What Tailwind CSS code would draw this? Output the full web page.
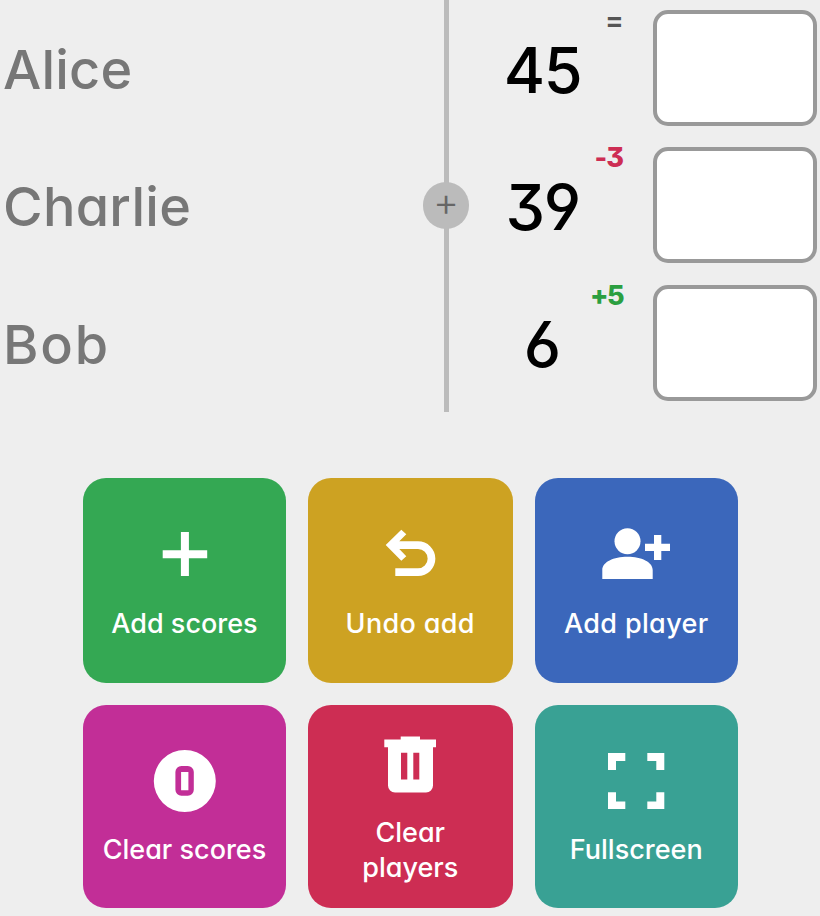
<!DOCTYPE html>
<html lang="en">
<head>
<meta charset="utf-8">
<title>Scores</title>
<script src="https://cdn.jsdelivr.net/npm/@tailwindcss/browser@4"></script>
</head>
<body class="h-[916px] w-[820px] overflow-hidden bg-[#eee] font-['Inter','Lato',sans-serif] font-medium [font-feature-settings:'cv03','cv04','cv09','cv11']">
<main class="flex flex-col">
  <section class="relative flex h-[412px] flex-col">
    <div class="absolute left-[443.5px] top-0 h-[412px] w-[5.5px] bg-[#bbb]"></div>
    <button class="absolute left-[423px] top-[181.5px] flex h-[47px] w-[46px] items-center justify-center rounded-full bg-[#bbb] pb-[6px] text-[40px] font-light text-[#666]">+</button>
    <div class="flex h-[137px] pt-[10px]">
      <div class="flex h-[118px] w-[479px] items-center pl-[3px] text-[54px] text-[#777]"><span class="tracking-[0.2px]">Alice</span></div>
      <div class="flex h-[120px] w-[127px] items-center justify-center text-[63px] tracking-[-1.5px] text-black"><span>45</span></div>
      <div class="-ml-4 -mt-[2px] w-[33px] text-right text-[27px] leading-[26px] font-bold tracking-[-0.5px] text-[#555]">=</div>
      <input aria-label="Alice score" class="ml-[30px] h-[116px] w-[164px] rounded-[15px] border-4 border-[#999] bg-white">
    </div>
    <div class="flex h-[138px] pt-[10px]">
      <div class="flex h-[118px] w-[479px] items-center pl-[3px] text-[54px] text-[#777]"><span class="tracking-[0.3px]">Charlie</span></div>
      <div class="flex h-[120px] w-[127px] items-center justify-center text-[63px] tracking-[-1.5px] text-black"><span>39</span></div>
      <div class="-ml-4 -mt-[2px] w-[33px] text-right text-[27px] leading-[26px] font-extrabold tracking-[-1px] text-[#cd2d53]">-3</div>
      <input aria-label="Charlie score" class="ml-[30px] h-[116px] w-[164px] rounded-[15px] border-4 border-[#999] bg-white">
    </div>
    <div class="flex h-[137px] pt-[10px]">
      <div class="flex h-[118px] w-[479px] items-center pl-[3px] text-[54px] text-[#777]"><span class="tracking-[1.8px]">Bob</span></div>
      <div class="flex h-[119px] w-[127px] items-center justify-center text-[63px] text-black"><span>6</span></div>
      <div class="-ml-4 -mt-[2px] w-[32px] text-right text-[27px] leading-[26px] font-extrabold tracking-[-1.5px] text-[#2b9f40]">+5</div>
      <input aria-label="Bob score" class="ml-[31px] h-[116px] w-[164px] rounded-[15px] border-4 border-[#999] bg-white">
    </div>
  </section>
  <section class="ml-[83px] mt-[66px] grid w-[655px] grid-cols-[203px_204.5px_203.5px] grid-rows-[204.5px_203px] justify-between gap-y-[22px] text-[27px] leading-[35px] text-white">
    <button class="flex flex-col items-center justify-center gap-[15px] rounded-[23px] bg-[#34a853]">
      <svg class="size-[72px]" viewBox="0.3 0.5 72 72" fill="currentColor"><path d="M32.2 13.5h8v18.2h18.3v8H40.2v17.8h-8V39.7H14v-8h18.2z"/></svg>
      <span>Add scores</span>
    </button>
    <button class="flex flex-col items-center justify-center gap-[15px] rounded-[23px] bg-[#cda222]">
      <svg class="size-[72px]" viewBox="-0.5 0.5 72 72" fill="currentColor"><path d="M11.2 26.5 26.8 11.2l5 4.6-7 7h18.7a17.35 17.35 0 0 1 0 34.7H20.8v-7.7h22.7a9.65 9.65 0 0 0 0-19.3H24.8l7 7.3-5 4.4z"/></svg>
      <span class="tracking-[0.35px]">Undo add</span>
    </button>
    <button class="flex flex-col items-center justify-center gap-[15px] rounded-[23px] bg-[#3b67bb]">
      <svg class="size-[72px]" viewBox="-0.5 0.5 72 72" fill="currentColor"><circle cx="27" cy="22.8" r="13"/><path d="M1.8 60.5v-9C1.8 43.5 13 38.2 27 38.2s25.2 5.3 25.2 13.3v9zM53.5 16.5h7.3v8.7h8.7v7.3h-8.7v9h-7.3v-9h-9v-7.3h9z"/></svg>
      <span class="tracking-[0.35px]">Add player</span>
    </button>
    <button class="flex flex-col items-center justify-center gap-[15px] rounded-[23px] bg-[#c22e97]">
      <svg class="size-[72px]" viewBox="0.4 0 72 72" fill="currentColor"><path fill-rule="evenodd" d="M5.2 36a31 31 0 1 1 62 0a31 31 0 1 1-62 0zM32.8 21a6 6 0 0 0-6 6v17.7a6 6 0 0 0 6 6h6.4a6 6 0 0 0 6-6V27a6 6 0 0 0-6-6zM32.5 27h7.3v18.3h-7.3z"/></svg>
      <span>Clear scores</span>
    </button>
    <button class="flex flex-col items-center justify-center gap-[15px] rounded-[23px] bg-[#cd2d53]">
      <svg class="size-[72px]" viewBox="-0.5 -0.5 72 72" fill="currentColor"><path fill-rule="evenodd" d="M9.8 11h16.4V8h19.3v3h16v7.7h-3V57a7 7 0 0 1-7 7h-31a7 7 0 0 1-7-7V18.7H9.8zM26.5 24.3V51h6.3V24.3zM38.8 24.3V51h6V24.3z"/></svg>
      <span>Clear<br>players</span>
    </button>
    <button class="flex flex-col items-center justify-center gap-[15px] rounded-[23px] bg-[#39a194]">
      <svg class="size-[72px]" viewBox="-0.5 0 72 72" fill="currentColor"><path d="M7.5 8h17.3v8h-9.3v9h-8zM46.8 8h17v17h-8v-9h-9zM7.5 47.3h8v9.2h9.3V64H7.5zM55.8 47.3h8V64h-17v-7.5h9z"/></svg>
      <span>Fullscreen</span>
    </button>
  </section>
</main>
</body>
</html>
